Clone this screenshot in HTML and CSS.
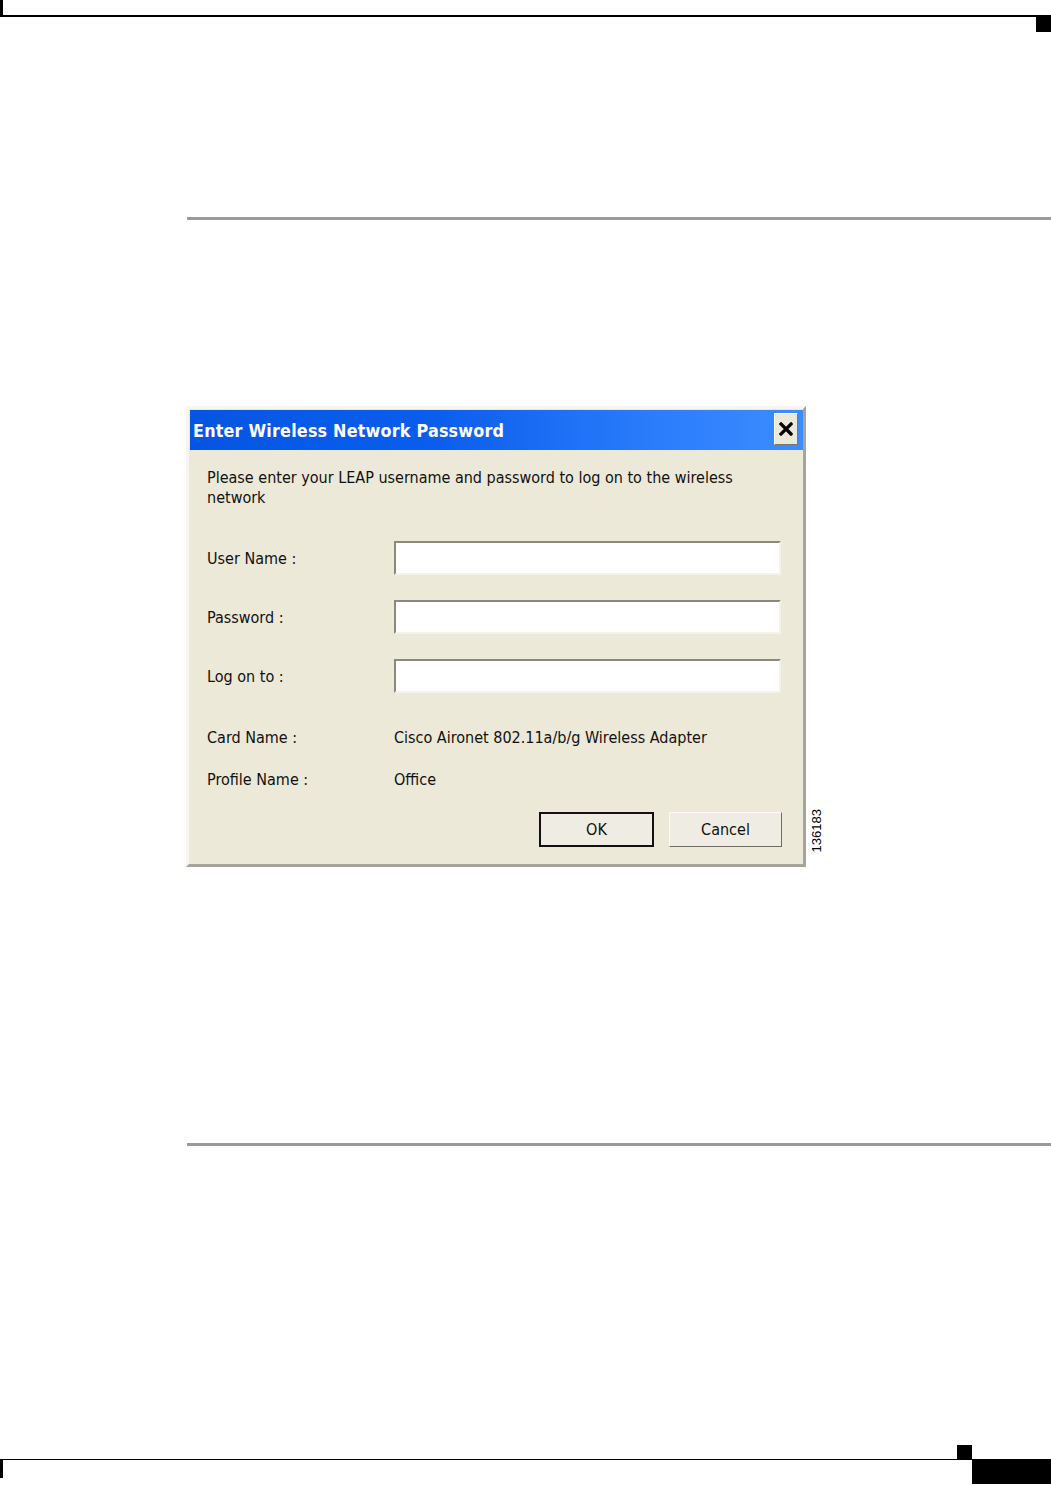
FILE: index.html
```html
<!DOCTYPE html>
<html>
<head>
<meta charset="utf-8">
<link rel="stylesheet" href="styles.css">
</head>
<body>
<div class="page">
  <div class="hdr"></div>
  <div class="hdr-tab"></div>
  <div class="rule rule-top"></div>
  <div class="figure">
    <div class="dialog">
      <div class="titlebar">
        <span class="title">Enter Wireless Network Password</span>
        <span class="close">
          <svg width="14" height="14" viewBox="0 0 14 14"><path d="M2 2 L12 12 M12 2 L2 12" stroke="#000" stroke-width="3.2" stroke-linecap="square"/></svg>
        </span>
      </div>
      <div class="body">
        <p class="intro">Please enter your LEAP username and password to log on to the wireless<br>network</p>
        <div class="row row-1"><span class="label">User Name :</span><span class="field"></span></div>
        <div class="row row-2"><span class="label">Password :</span><span class="field"></span></div>
        <div class="row row-3"><span class="label">Log on to :</span><span class="field"></span></div>
        <div class="row row-4"><span class="label">Card Name :</span><span class="value">Cisco Aironet 802.11a/b/g Wireless Adapter</span></div>
        <div class="row row-5"><span class="label">Profile Name :</span><span class="value">Office</span></div>
        <div class="buttons">
          <span class="btn btn-default">OK</span>
          <span class="btn">Cancel</span>
        </div>
      </div>
    </div>
    <div class="fig-num">136183</div>
  </div>
  <div class="rule rule-bottom"></div>
  <div class="ftr-tab"></div>
  <div class="ftr">
    <div class="ftr-bar"></div>
    <div class="ftr-block"></div>
  </div>
</div>
</body>
</html>
```

FILE: styles.css
```css
html, body {
  margin: 0;
  padding: 0;
  background: #ffffff;
}
.page {
  width: 1051px;
  height: 1485px;
  overflow: hidden;
  font-family: "DejaVu Sans Condensed", "Liberation Sans", sans-serif;
}
.hdr {
  height: 15px;
  border-left: 3px solid #000;
  border-bottom: 2px solid #000;
}
.hdr-tab {
  width: 15px;
  height: 15px;
  background: #000;
  margin-left: auto;
}
.rule {
  height: 3px;
  background: #9a9a9a;
  margin-left: 187px;
}
.rule-top {
  margin-top: 185px;
}
.figure {
  display: flex;
  align-items: flex-end;
  margin-top: 186px;
  margin-left: 186px;
}
.dialog {
  width: 614px;
  height: 455px;
  background: #ece9d8;
  border: 3px solid;
  border-color: #f6f5ef #a6a49a #a6a49a #f6f5ef;
  display: flex;
  flex-direction: column;
}
.titlebar {
  height: 40px;
  margin-top: 1px;
  margin-left: 1px;
  background: linear-gradient(to right, #0456e2 0%, #0b5ded 40%, #2a7cfb 75%, #3d8cff 100%);
  display: flex;
  align-items: center;
  justify-content: space-between;
  padding-left: 3px;
  padding-right: 5px;
}
.title {
  color: #ffffff;
  font-family: "DejaVu Sans Condensed", "Liberation Sans", sans-serif;
  font-weight: bold;
  font-size: 17.8px;
  letter-spacing: 0.2px;
}
.close {
  width: 22px;
  height: 30px;
  background: #ece9d8;
  border: 1px solid;
  border-color: #ffffff #7a786e #7a786e #ffffff;
  display: flex;
  align-items: center;
  justify-content: center;
  margin-top: -3px;
}
.body {
  padding: 18px 21px 0 18px;
  font-size: 16px;
  color: #111;
}
.intro {
  margin: 0;
  line-height: 20px;
}
.row {
  display: flex;
  align-items: center;
  height: 34px;
}
.row-1 { margin-top: 33px; }
.row-2 { margin-top: 25px; }
.row-3 { margin-top: 25px; }
.row-4 { margin-top: 27px; }
.row-5 { margin-top: 8px; }
.label {
  width: 187px;
  flex: none;
}
.field {
  width: 383px;
  height: 30px;
  background: #fff;
  border: 2px solid;
  border-color: #8b887c #f4f3ea #f4f3ea #8b887c;
}
.buttons {
  display: flex;
  justify-content: flex-end;
  gap: 15px;
  margin-top: 16px;
}
.btn {
  box-sizing: border-box;
  width: 113px;
  height: 35px;
  display: flex;
  align-items: center;
  justify-content: center;
  background: #efede3;
  border: 1px solid;
  border-color: #fafaf6 #6f6d63 #6f6d63 #fafaf6;
}
.btn-default {
  width: 115px;
  border: 2px solid #111;
}
.fig-num {
  writing-mode: vertical-rl;
  transform: rotate(180deg);
  font-family: "Liberation Sans", sans-serif;
  font-size: 13px;
  margin-left: 3px;
  margin-bottom: 15px;
  color: #000;
}
.rule-bottom {
  margin-top: 276px;
}
.ftr-tab {
  width: 15px;
  height: 14px;
  background: #000;
  margin-left: auto;
  margin-right: 79px;
  margin-top: 299px;
}
.ftr {
  display: flex;
  justify-content: space-between;
  align-items: flex-start;
  border-top: 1px solid #000;
}
.ftr-bar {
  width: 3px;
  height: 18px;
  background: #000;
}
.ftr-block {
  width: 79px;
  height: 25px;
  background: #000;
  margin-top: -1px;
}
```
